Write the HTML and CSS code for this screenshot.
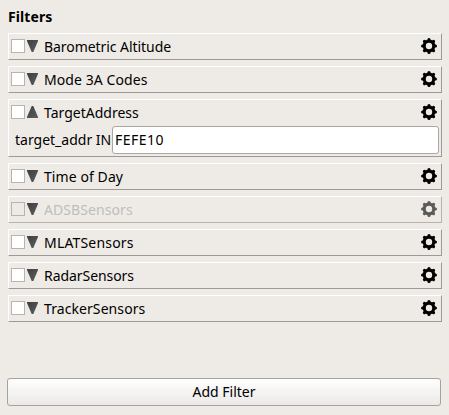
FILE: index.html
```html
<!DOCTYPE html>
<html lang="en">
<head>
<meta charset="utf-8">
<title>Filters</title>
<link rel="stylesheet" href="styles.css">
</head>
<body>
<svg width="0" height="0" class="defs" aria-hidden="true">
  <defs>
    <linearGradient id="shade" x1="0" y1="0" x2="1" y2="1"><stop offset="0" stop-color="#3c3e3f"/><stop offset="1" stop-color="#5c5e5f"/></linearGradient>
    <symbol id="down" viewBox="0 0 11 12"><path fill="url(#shade)" d="M0 0H11V1L6.3 12H4.7L0 1Z"/></symbol>
    <symbol id="up" viewBox="0 0 11 12"><path fill="url(#shade)" d="M0 12H11V11L6.3 0H4.7L0 11Z"/></symbol>
    <symbol id="gear" viewBox="-8 -8 16 16">
      <circle r="4.8" fill="none" stroke="currentColor" stroke-width="3.2"/>
      <g stroke="currentColor" stroke-width="3.2" stroke-linecap="round">
        <path d="M0-6.4V-5.5M0 6.4V5.5M-6.4 0H-5.5M6.4 0H5.5"/>
        <path transform="rotate(45)" d="M0-6.4V-5.5M0 6.4V5.5M-6.4 0H-5.5M6.4 0H5.5"/>
      </g>
    </symbol>
  </defs>
</svg>
<main class="panel">
  <h1 class="title">Filters</h1>
  <div class="filters">
    <section class="filter"><div class="head"><span class="check"></span><svg class="arrow"><use href="#down"/></svg><span class="name tight">Barometric Altitude</span><svg class="gear"><use href="#gear"/></svg></div></section>
    <section class="filter"><div class="head"><span class="check"></span><svg class="arrow"><use href="#down"/></svg><span class="name loose">Mode 3A Codes</span><svg class="gear"><use href="#gear"/></svg></div></section>
    <section class="filter"><div class="head"><span class="check"></span><svg class="arrow"><use href="#up"/></svg><span class="name">TargetAddress</span><svg class="gear"><use href="#gear"/></svg></div>
      <div class="condition"><span class="label">target_addr IN</span><div class="field">FEFE10</div></div></section>
    <section class="filter"><div class="head"><span class="check"></span><svg class="arrow"><use href="#down"/></svg><span class="name loose">Time of Day</span><svg class="gear"><use href="#gear"/></svg></div></section>
    <section class="filter disabled"><div class="head"><span class="check"></span><svg class="arrow"><use href="#down"/></svg><span class="name loose">ADSBSensors</span><svg class="gear"><use href="#gear"/></svg></div></section>
    <section class="filter"><div class="head"><span class="check"></span><svg class="arrow"><use href="#down"/></svg><span class="name looser">MLATSensors</span><svg class="gear"><use href="#gear"/></svg></div></section>
    <section class="filter"><div class="head"><span class="check"></span><svg class="arrow"><use href="#down"/></svg><span class="name tight">RadarSensors</span><svg class="gear"><use href="#gear"/></svg></div></section>
    <section class="filter"><div class="head"><span class="check"></span><svg class="arrow"><use href="#down"/></svg><span class="name loose">TrackerSensors</span><svg class="gear"><use href="#gear"/></svg></div></section>
  </div>
  <button class="add">Add Filter</button>
</main>
</body>
</html>
```
FILE: styles.css
```css
* { box-sizing: border-box; }
body {
  margin: 0;
  background: #eeebe6;
  color: #000;
  font: 14px/20px "Noto Sans", sans-serif;
}
.defs { display: block; height: 0; }
.panel {
  display: flex;
  flex-direction: column;
  height: 415px;
  padding: 7px 7px 9px 8px;
}
.title { margin: 0 0 6px; font-size: 14px; line-height: 20px; font-weight: 700; letter-spacing: 0.1px; }
.filters { display: flex; flex-direction: column; gap: 6px; }
.filter {
  min-height: 27px;
  border: 1px solid;
  border-color: #fff #9c9996 #9c9996 #fff;
}
.head {
  display: flex;
  align-items: center;
  height: 24px;
  padding: 0 4px 0 2px;
}
.check { width: 14px; height: 14px; border: 1px solid #b7b4b0; background: #fff; }
.arrow { width: 11px; height: 12px; margin-left: 2px; }
.name { flex: 1; margin-left: 6px; padding-top: 2px; white-space: nowrap; }
.tight { letter-spacing: -0.06px; }
.loose { letter-spacing: 0.08px; }
.looser { letter-spacing: 0.18px; }
.gear { width: 16px; height: 16px; }
.disabled { border-color: #fff #b9b1aa #b9b1aa #fff; }
.disabled .check { background: transparent; }
.disabled .name { color: #bebebe; }
.disabled .gear { color: #5b5b5b; }
.condition { display: flex; align-items: center; height: 32px; padding: 0 2px 0 6px; }
.label { width: 97px; white-space: nowrap; }
.field {
  flex: 1;
  height: 28px;
  padding: 0 2px;
  border: 1px solid #a9a6a3;
  border-radius: 3px;
  background: #fff;
  line-height: 25px;
  letter-spacing: 0.5px;
}
.add {
  height: 28px;
  margin: auto 1px 0 -1px;
  padding: 0;
  border: 1px solid #a5a29f;
  border-radius: 3px;
  background: linear-gradient(#fff, #ebe9e7);
  color: #000;
  font: inherit;
}
```
